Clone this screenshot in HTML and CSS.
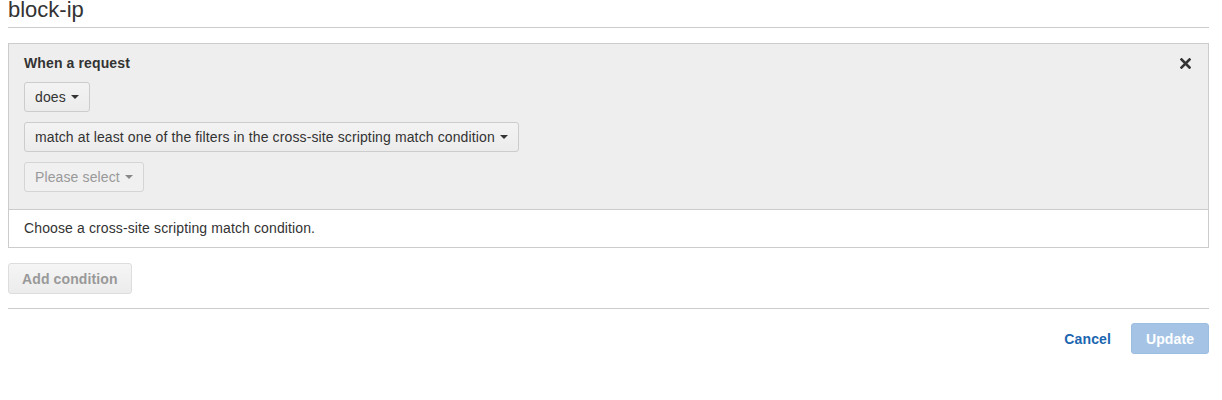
FILE: index.html
```html
<!DOCTYPE html>
<html>
<head>
<meta charset="utf-8">
<link rel="stylesheet" href="styles.css">
</head>
<body>
<h1 class="title">block-ip</h1>
<div class="panel">
  <div class="panel-body">
    <div class="panel-head">
      <span class="label">When a request</span>
      <button class="close" aria-label="Remove">
        <svg width="11" height="11" viewBox="0 0 11 11"><path d="M1.5 1.5 L9.5 9.5 M9.5 1.5 L1.5 9.5" stroke="#333" stroke-width="2.6" stroke-linecap="square"/></svg>
      </button>
    </div>
    <div class="stack">
      <button class="dd">does <span class="caret"></span></button>
      <button class="dd">match at least one of the filters in the cross-site scripting match condition <span class="caret"></span></button>
      <button class="dd disabled">Please select <span class="caret"></span></button>
    </div>
  </div>
  <div class="panel-foot">Choose a cross-site scripting match condition.</div>
</div>
<button class="add">Add condition</button>
<div class="actions">
  <a class="cancel" href="#">Cancel</a>
  <button class="update">Update</button>
</div>
</body>
</html>
```
FILE: styles.css
```css
html, body { margin: 0; padding: 0; background: #fff; }
body {
  padding: 0 13px 0 8px;
  font-family: "Helvetica Neue", "Liberation Sans", Arial, sans-serif;
  font-size: 14px;
  letter-spacing: 0.12px;
  color: #333;
}
.title {
  margin: 0;
  padding-bottom: 7px;
  font-size: 22px;
  line-height: 20px;
  font-weight: normal;
  letter-spacing: 0;
  color: #333;
  border-bottom: 1px solid #ccc;
}
.panel {
  margin-top: 15px;
  border: 1px solid #ccc;
}
.panel-body {
  background: #eee;
  padding: 10px 16px 17px 15px;
  border-bottom: 1px solid #ccc;
}
.panel-head {
  display: flex;
  justify-content: space-between;
  align-items: center;
  height: 18px;
}
.label { font-weight: bold; line-height: 18px; }
.close {
  border: 0; background: none; padding: 0; margin-right: 1px;
  display: flex; align-items: center; cursor: pointer;
}
.stack {
  margin-top: 10px;
  display: flex;
  flex-direction: column;
  align-items: flex-start;
  gap: 10px;
}
.dd {
  height: 30px;
  padding: 0 10px 0 10px;
  font-family: inherit;
  font-size: 14px;
  letter-spacing: inherit;
  color: #333;
  background: linear-gradient(#f3f3f3, #ececec);
  border: 1px solid #ccc;
  border-radius: 3px;
  display: flex;
  align-items: center;
  gap: 5px;
}
.dd.disabled { color: #999; background: #f0f0f0; border-color: #d5d5d5; }
.caret {
  width: 0; height: 0;
  border-left: 4px solid transparent;
  border-right: 4px solid transparent;
  border-top: 4px solid currentColor;
  margin-top: -1px;
}
.dd.disabled .caret { border-top-color: #888; }
.panel-foot {
  padding: 10px 15px 10px;
  line-height: 17px;
  background: #fff;
}
.add {
  margin-top: 15px;
  height: 31px;
  padding: 0 13px;
  font-family: inherit;
  font-size: 14px;
  letter-spacing: inherit;
  font-weight: bold;
  color: #999;
  background: linear-gradient(#f5f5f5, #ececec);
  border: 1px solid #ddd;
  border-radius: 3px;
  display: block;
}
.actions {
  margin-top: 14px;
  border-top: 1px solid #ccc;
  padding-top: 14px;
  display: flex;
  justify-content: flex-end;
  align-items: center;
  gap: 20px;
}
.cancel {
  color: #1b66b0;
  font-weight: bold;
  text-decoration: none;
}
.update {
  height: 31px;
  width: 78px;
  font-family: inherit;
  font-size: 14px;
  letter-spacing: inherit;
  font-weight: bold;
  color: #fff;
  background: #a5c4e5;
  border: 1px solid #9bbde0;
  border-radius: 3px;
}
```
